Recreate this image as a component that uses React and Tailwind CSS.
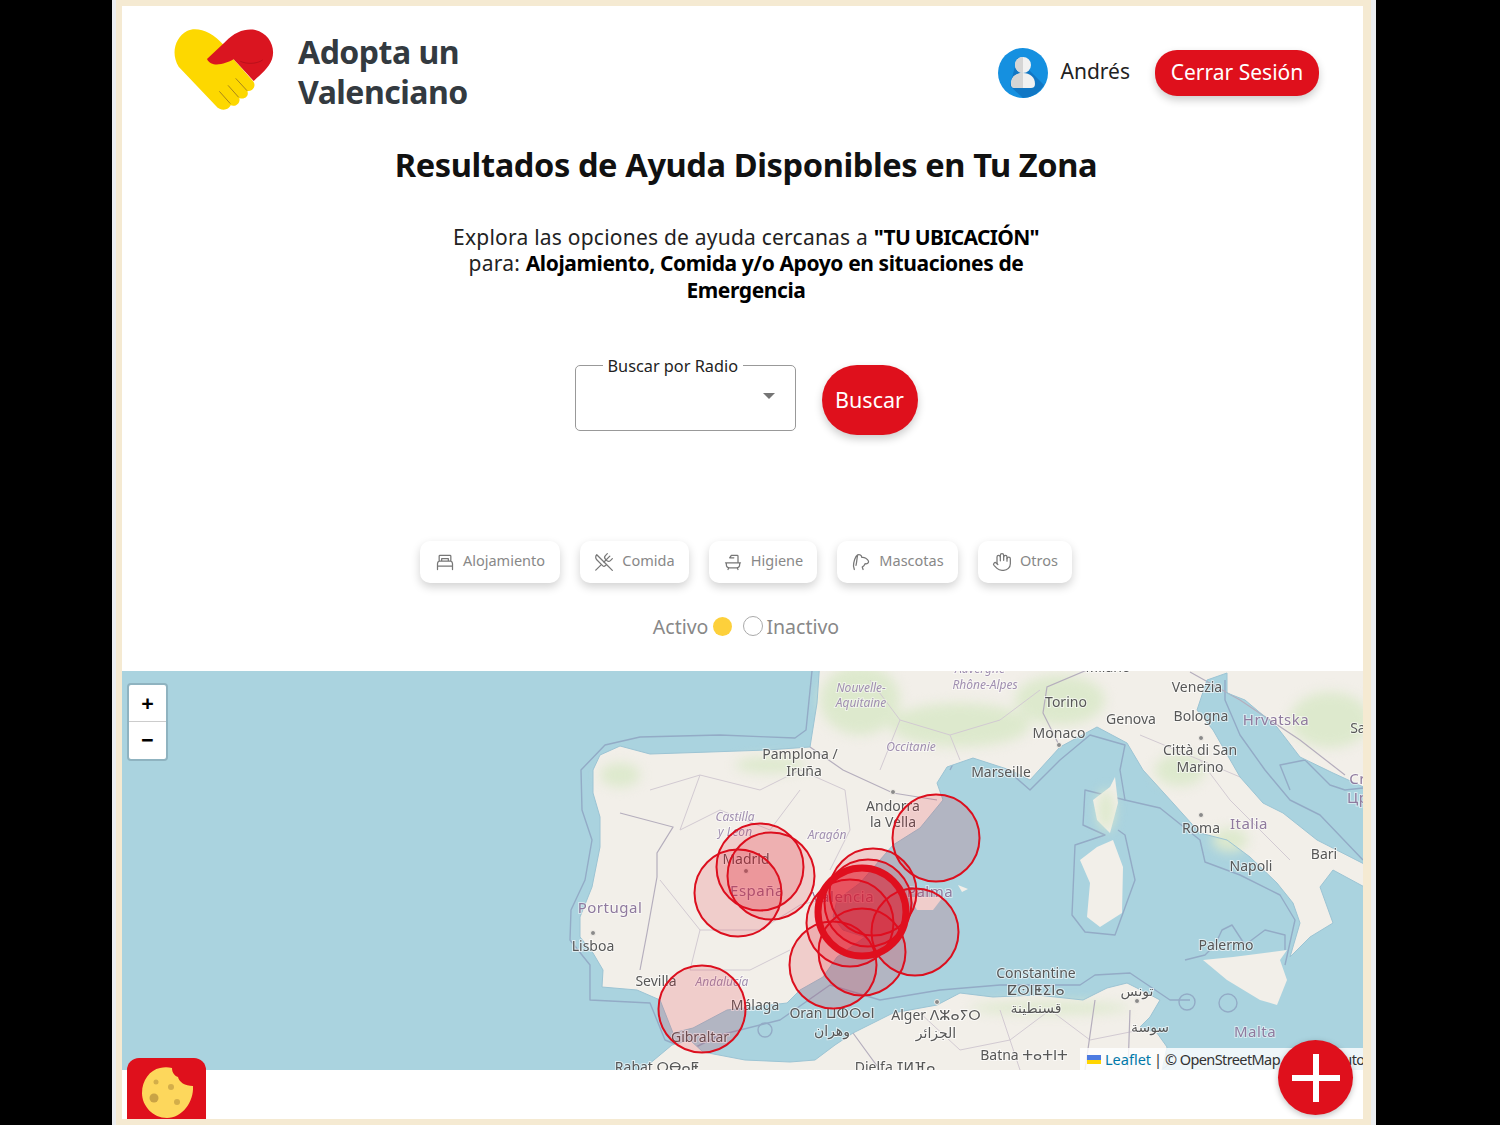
import { UtensilsCrossed, Hand } from 'lucide-react';

const font = "font-['Noto_Sans','Open_Sans',sans-serif]";

const Logo = () => (
    <svg viewBox="180 78 306 258" className="w-[102px] h-[86px] shrink-0">
        <path d="M335 135 C300 95 255 78 225 93 C190 112 175 160 200 200 L312 318 C325 334 350 332 356 316 C372 322 386 308 382 294 C398 300 412 288 406 274 C424 274 436 255 420 240 L365 178 L290 175 Z" fill="#fdd800" />
        <path d="M285 177 L340 125 C370 95 400 85 430 90 C470 100 492 140 480 178 C470 205 445 225 425 243 L365 178 C340 192 298 205 285 177 Z" fill="#da1520" />
        <path d="M385 184 C405 193 435 192 452 180" fill="none" stroke="#a80f18" strokeWidth="2" />
        <path d="M371 235 L405 272 M348 256 L380 292 M322 274 L355 311" fill="none" stroke="#a8851a" strokeWidth="3" />
    </svg>
);

const Avatar = () => (
    <svg viewBox="0 0 50 50" className="w-[50px] h-[50px] shrink-0">
        <circle cx="25" cy="25" r="25" fill="#1590e0" />
        <path d="M19 10 L46 37 A25 25 0 0 1 25 50 L12 38 Z" fill="#1177c4" />
        <circle cx="25" cy="17" r="8" fill="#f1f1f1" />
        <path d="M25 17 m-8 0 a8 8 0 0 0 8 8 v-16 a8 8 0 0 0 -8 8" fill="#d5d5d5" />
        <path d="M13 36 C13 29 18 25 25 25 C32 25 37 29 37 36 C37 39 35 40 33 40 L17 40 C15 40 13 39 13 36 Z" fill="#f1f1f1" />
        <path d="M25 25 C18 25 13 29 13 36 C13 39 15 40 17 40 L25 40 Z" fill="#d5d5d5" />
    </svg>
);

const lineIcon = (d) => ({ className }) => (
    <svg viewBox="0 0 24 24" fill="none" stroke="currentColor" strokeWidth="1.5" strokeLinecap="round" strokeLinejoin="round" className={className}>
        <path d={d} />
    </svg>
);

const BedIcon = lineIcon('M5 11 V5 a1 1 0 0 1 1-1 h12 a1 1 0 0 1 1 1 v6 M3 21 V14 a3 3 0 0 1 2-3 h14 a3 3 0 0 1 2 3 v7 M3 17 h18 M8 11 V8 h8 v3');
const TubIcon = lineIcon('M3 13 h18 M4 13 v2 a4 4 0 0 0 4 4 h8 a4 4 0 0 0 4-4 v-2 M18 13 V5 a1 1 0 0 0 -1-1 H10 l-2 3 h5 M7 19 l-1 2 M17 19 l1 2');
const PetIcon = lineIcon('M4 21 L3 17 C3 12 5 5 8 3.5 C10.5 2.5 12.5 4 13 6.5 C16 6 20 8 21 11 C21.5 13 19.5 14.5 17 14 L15.5 16.5 L13.5 18 L14.5 21 M8 3.5 C7 8 7 12 6 16');

const filters = [
    { label: 'Alojamiento', icon: BedIcon, w: 'w-[140px]' },
    { label: 'Comida', icon: UtensilsCrossed, w: 'w-[109px]' },
    { label: 'Higiene', icon: TubIcon, w: 'w-[108px]' },
    { label: 'Mascotas', icon: PetIcon, w: 'w-[121px]' },
    { label: 'Otros', icon: Hand, w: 'w-[94px]' },
];

// map labels: text, x, y
const labels = [
    ['Pamplona /', 800, 759], ['Iruña', 804, 776], ['Marseille', 1001, 777], ['Andorra', 893, 811], ['la Vella', 893, 827],
    ['Madrid', 746, 864], ['Lisboa', 593, 951], ['Sevilla', 656, 986], ['Málaga', 755, 1010], ['Gibraltar', 700, 1042],
    ['Oran ⵡⵀⵔⴰⵏ', 832, 1018], ['وهران', 832, 1036], ['Alger ⴷⵣⴰⵢⵔ', 936, 1020], ['الجزائر', 936, 1038],
    ['Constantine', 1036, 978], ['ⵇⵙⵏⵟⵉⵏⴰ', 1036, 995], ['قسنطينة', 1036, 1013], ['تونس', 1137, 996], ['سوسة', 1150, 1032],
    ['Batna ⵜⴰⵜⵏⵜ', 1024, 1060], ['Djelfa ⵊⵍⴼⴰ', 895, 1072], ['Rabat ⵔⴱⴰⵟ', 657, 1072],
    ['Torino', 1066, 707], ['Genova', 1131, 724], ['Monaco', 1059, 738], ['Venezia', 1197, 692], ['Bologna', 1201, 721],
    ['Città di San', 1200, 755], ['Marino', 1200, 772], ['Roma', 1201, 833], ['Napoli', 1251, 871], ['Bari', 1324, 859],
    ['Palermo', 1226, 950], ['Sarajevo', 1378, 733], ['Milano', 1108, 672],
];
const countries = [
    ['España', 757, 896], ['Portugal', 610, 913], ['Italia', 1249, 829], ['Malta', 1255, 1037], ['Hrvatska', 1276, 725],
    ['Crna', 1367, 784], ['Цpна', 1367, 803], ['Palma', 930, 897], ['Valencia', 843, 902],
];
const regions = [
    ['Nouvelle-', 861, 692], ['Aquitaine', 861, 707], ['Rhône-Alpes', 985, 689], ['Auvergne', 980, 673], ['Occitanie', 911, 751],
    ['Castilla', 735, 821], ['y León', 735, 836], ['Aragón', 827, 839], ['Andalucía', 722, 986],
];

const circles = [
    [936, 838], [702, 1009], [760, 867], [771, 876], [738, 893], [873, 892], [915, 932],
    [868, 903], [850, 923], [862, 952], [833, 965],
    [862, 912], [862, 912], [862, 912], [862, 912],
];

const europe = 'M820 660 L817 703 L810 747 L767 750 L710 752 L650 754 L620 746 L600 755 L593 770 L593 793 L600 817 L600 847 L592 887 L580 917 L580 937 L593 953 L603 970 L602 987 L637 990 L660 1000 L673 1033 L693 1028 L727 1010 L787 1003 L800 990 L823 977 L837 957 L865 937 L843 930 L833 917 L837 900 L860 883 L880 860 L893 845 L920 828 L943 800 L937 783 L947 767 L973 758 L1010 770 L1030 780 L1060 747 L1097 727 L1127 743 L1143 770 L1173 803 L1200 833 L1227 840 L1250 857 L1277 883 L1293 903 L1300 923 L1290 957 L1310 937 L1333 923 L1320 887 L1333 870 L1370 890 L1370 867 L1317 840 L1283 813 L1263 803 L1240 777 L1213 730 L1197 710 L1207 680 L1227 673 L1227 693 L1245 700 L1277 727 L1300 757 L1333 773 L1370 790 L1370 660 Z';
const africa = 'M630 1080 L672 1045 L690 1040 L703 1052 L745 1060 L790 1062 L815 1060 L835 1045 L853 1033 L893 1013 L937 1005 L960 993 L993 997 L1037 995 L1083 1000 L1107 988 L1127 983 L1147 993 L1160 1000 L1150 1017 L1140 1027 L1157 1033 L1167 1047 L1160 1080 Z';
const islands = [
    'M1115 777 L1118 803 L1110 833 L1097 820 L1093 800 L1110 787 Z',
    'M1113 840 L1123 867 L1122 913 L1100 927 L1087 917 L1090 883 L1080 860 L1097 847 Z',
    'M1203 960 L1233 957 L1287 950 L1280 960 L1287 980 L1277 1005 L1260 1000 L1227 980 Z',
    'M910 897 L943 897 L933 910 L917 910 Z',
    'M958 885 L968 889 L962 892 Z',
];
const seaLines = [
    'M812 671 L806 730 L795 738 L720 735 L640 737 L605 745 L581 770 L582 810 L592 840 L585 880 L571 910 L570 940 L590 965 L590 1000 L650 1003 L665 1040 L690 1050 L720 1035 L780 1020 L830 985 L880 1000 L940 990 L1000 985 L1080 985 L1095 975 L1130 973 L1170 1000 L1190 1000',
    'M950 770 L955 760 L990 755 L1030 790 L1060 760 L1090 735 L1125 745 L1120 770 L1125 800 L1160 808 L1200 840 L1205 862 L1240 875 L1280 895 L1295 920 L1285 965',
    'M1125 800 L1085 790 L1083 825 L1105 835 L1075 845 L1072 915 L1085 932 L1115 935 L1135 880 L1125 835 L1118 830',
    'M1185 960 L1205 955 L1215 945 L1222 930 L1232 925 L1245 945 L1265 930 L1285 935 L1285 950',
    'M1225 680 L1225 700 L1240 735 L1265 770 L1290 800 L1320 815 L1363 860',
    'M1290 790 L1280 765 L1305 760 L1330 785 L1345 790 L1363 788',
];
const borders = [
    'M810 747 L843 770 L893 793 L937 800',
    'M620 813 L673 827 L657 853 L657 877 L647 933 L640 970',
    'M1060 747 L1043 713 L1047 687 L1087 670',
    'M1190 672 L1240 700 L1300 740 L1345 775',
    'M853 1033 L880 1070 M1095 1000 L1085 1070 M1130 1010 L1128 1070',
];
const provinces = [
    'M650 790 L700 775 L760 790 L800 770 L845 790 L850 830 L830 870 M700 775 L680 830 L720 810 L770 830 L800 790',
    'M660 880 L700 930 L760 930 L800 905 L820 900 M700 930 L690 970 L750 970 L790 950',
    'M870 680 L900 720 L950 735 L1000 720 L1040 690 M900 720 L880 770 M950 735 L960 760',
    'M1140 735 L1200 760 L1230 800 L1260 830 L1290 860 M1200 760 L1240 777',
    'M920 1013 L960 1050 L1010 1040 L1050 1010 L1090 1040 L1140 1030 M1000 1010 L1020 1070',
];

const SpainMap = () => (
    <svg viewBox="122 671 1241 399" className="absolute inset-0 w-full h-full blur-[0.4px]">
        <rect x="122" y="671" width="1241" height="399" fill="#aad3df" />
        <g fill="none" stroke="#93abc6" strokeWidth="1.4" strokeLinejoin="round">
            {seaLines.map((d) => <path key={d} d={d} />)}
            <circle cx="1187" cy="1002" r="8" />
            <circle cx="1228" cy="1003" r="9" />
            <circle cx="1160" cy="1060" r="9" />
            <circle cx="765" cy="1030" r="7" />
        </g>
        <path d={europe} fill="#f2efe9" />
        <path d={africa} fill="#f2efe9" />
        {islands.map((d) => <path key={d} d={d} fill="#f2efe9" />)}
        <g fill="#dde9cd" className="blur-[6px]">
            <ellipse cx="860" cy="700" rx="40" ry="35" />
            <ellipse cx="960" cy="725" rx="70" ry="22" />
            <ellipse cx="1060" cy="700" rx="45" ry="25" />
            <ellipse cx="1330" cy="720" rx="40" ry="28" />
            <ellipse cx="1180" cy="770" rx="25" ry="16" />
            <ellipse cx="1106" cy="810" rx="8" ry="20" />
            <ellipse cx="620" cy="775" rx="20" ry="12" />
            <ellipse cx="770" cy="765" rx="35" ry="8" />
            <ellipse cx="1050" cy="1008" rx="80" ry="6" />
            <ellipse cx="1230" cy="840" rx="18" ry="12" />
        </g>
        <g fill="none" stroke="#d2cad2" strokeWidth="1">
            {provinces.map((d) => <path key={d} d={d} />)}
        </g>
        <g fill="none" stroke="#b5aebd" strokeWidth="1.2">
            {borders.map((d) => <path key={d} d={d} />)}
        </g>
        <path d={europe} fill="none" stroke="#9cc4d4" strokeWidth="1" />
        <path d={africa} fill="none" stroke="#9cc4d4" strokeWidth="1" />
        {[[893, 792], [593, 933], [746, 871], [1059, 745], [1201, 738], [1201, 815], [1137, 1001], [937, 1002]].map(([x, y]) => (
            <circle key={x} cx={x} cy={y} r="2.5" fill="#8a8a8a" stroke="#f2efe9" />
        ))}
        <g className="font-['Noto_Sans','DejaVu_Sans',sans-serif] text-[14px]" textAnchor="middle" fill="#575757" stroke="#ffffff" strokeOpacity="0.6" strokeWidth="2" paintOrder="stroke">
            {labels.map(([t, x, y]) => <text key={t} x={x} y={y}>{t}</text>)}
        </g>
        <g className="font-['Noto_Sans','DejaVu_Sans',sans-serif] text-[15px] tracking-[0.5px]" textAnchor="middle" fill="#8f7a9e" stroke="#ffffff" strokeOpacity="0.5" strokeWidth="2" paintOrder="stroke">
            {countries.map(([t, x, y]) => <text key={t} x={x} y={y}>{t}</text>)}
        </g>
        <g className="font-['Noto_Sans','DejaVu_Sans',sans-serif] text-[12px] italic" textAnchor="middle" fill="#a08fb0" stroke="#ffffff" strokeOpacity="0.5" strokeWidth="2" paintOrder="stroke">
            {regions.map(([t, x, y]) => <text key={t} x={x} y={y}>{t}</text>)}
        </g>
        {circles.map(([x, y], i) => (
            <circle key={i} cx={x} cy={y} r="43.5" fill="#e3101f" fillOpacity="0.15" stroke="#dc0f1e" strokeWidth="2" />
        ))}
        {/* the stacked markers read as one thick ring */}
        <circle cx="862" cy="912" r="44" fill="none" stroke="#e00f1e" strokeWidth="7" />
    </svg>
);

export default function App() {
    return (
        <div className={`h-[1125px] overflow-hidden bg-black pl-[112px] ${font}`}>
            <div className="w-[1264px] h-[1125px] bg-[#eceef0] pl-[4px] pr-[5px]">
                <div className="h-full bg-[#f5ead2] pl-[6px] pr-[8px] py-[6px]">
                    <div className="relative bg-white h-[1113px] overflow-hidden">
                        <header className="h-[134px] flex items-center justify-between pl-[50px] pr-[44px]">
                            <div className="flex items-center gap-[24px] -mt-[8px]">
                                <Logo />
                                <h1 className="text-[32px] leading-[40px] font-bold text-[#333a40] mt-[6px] tracking-[-0.5px]">Adopta un<br />Valenciano</h1>
                            </div>
                            <div className="flex items-center">
                                <Avatar />
                                <span className="ml-[13px] mr-[25px] text-[21px] text-[#222] -mt-[2px]">Andrés</span>
                                <button className="w-[164px] h-[46px] rounded-[22px] bg-[#df101c] text-white text-[21px] shadow-[0_4px_8px_rgba(0,0,0,0.2)]">Cerrar Sesión</button>
                            </div>
                        </header>

                        <div className="pl-[7px] flex flex-col items-center">
                            <h2 className="mt-[4px] text-[32.6px] leading-[42px] font-bold text-[#111] whitespace-nowrap tracking-[-0.4px]">Resultados de Ayuda Disponibles en Tu Zona</h2>
                            <p className="mt-[38px] text-[21px] leading-[26.4px] text-center text-[#222] whitespace-nowrap tracking-[0.22px]">
                                Explora las opciones de ayuda cercanas a <b className="font-bold text-black tracking-[-0.7px]">"TU UBICACIÓN"</b><br />
                                para: <b className="font-bold text-black tracking-[-0.4px]">Alojamiento, Comida y/o Apoyo en situaciones de</b><br />
                                <b className="font-bold text-black tracking-[-0.4px]">Emergencia</b>
                            </p>

                            <div className="mt-[62px] flex items-start gap-[26px]">
                                <div className="relative w-[221px] h-[66px] border border-[#999] rounded-[5px] bg-white">
                                    <span className="absolute left-[27px] -top-[10px] bg-white px-[5px] text-[16.3px] leading-[20px] text-[#222] whitespace-nowrap">Buscar por Radio</span>
                                    <div className="absolute right-[20px] top-[27px] border-x-[6px] border-t-[6px] border-x-transparent border-t-[#757575]"></div>
                                </div>
                                <button className="w-[96px] h-[70px] rounded-[35px] bg-[#df101c] text-white text-[21.5px] shadow-[0_4px_8px_rgba(0,0,0,0.2)]">Buscar</button>
                            </div>

                            <div className="mt-[106px] flex gap-[20px]">
                                {filters.map(({ label, icon: Icon, w }) => (
                                    <div key={label} className={`${w} h-[42px] rounded-[10px] bg-white flex items-center justify-center gap-[8px] text-[#888] text-[14.5px] shadow-[0_4px_10px_rgba(0,0,0,0.18)]`}>
                                        <Icon className="w-[20px] h-[20px] text-[#777] stroke-[1.5]" />
                                        <span className="-mt-[2px]">{label}</span>
                                    </div>
                                ))}
                            </div>

                            <div className="mt-[31px] h-[24px] flex items-center text-[19.5px] text-[#888]">
                                <span>Activo</span>
                                <span className="ml-[5px] w-[19px] h-[19px] rounded-full bg-[#fdd03b]"></span>
                                <span className="ml-[11px] w-[20px] h-[20px] rounded-full border border-[#aaa]"></span>
                                <span className="ml-[3px]">Inactivo</span>
                            </div>
                        </div>

                        <div className="relative mt-[33px] h-[399px] overflow-hidden">
                            <SpainMap />
                            <div className="absolute left-[5px] top-[12px] w-[41px] rounded-[4px] border-2 border-[#8fb3c0] bg-white text-black font-bold text-[22px] leading-[34px] text-center overflow-hidden">
                                <div className="h-[37px] border-b border-[#ccc]">+</div>
                                <div className="h-[37px]">−</div>
                            </div>
                            <div className="absolute right-0 bottom-0 w-[283px] h-[22px] bg-white/80 flex items-center pl-[7px] text-[14.5px] leading-[22px] text-[#333] whitespace-nowrap overflow-hidden">
                                <span className="w-[14px] h-[9px] mr-[4px] shrink-0 flex flex-col">
                                    <span className="h-[5px] bg-[#4c7be1]"></span>
                                    <span className="h-[4px] bg-[#ffd500]"></span>
                                </span>
                                <span className="text-[#0078a8]">Leaflet</span>
                                <span className="mx-[3px]">|</span>
                                <span className="tracking-[-0.6px]">© OpenStreetMap</span>
                                <span className="ml-[19px] tracking-[-0.6px]">contributors</span>
                            </div>
                        </div>

                        <div className="absolute left-[5px] bottom-0 w-[79px] h-[61px] rounded-t-[12px] bg-[#df101c] overflow-hidden">
                            <svg viewBox="0 0 79 61" className="w-full h-full">
                                <path d="M33 10 C37 9 41 9 45 10 C45 15 48 18 51 19 C52 24 58 28 66 28 C67 44 55 60 40 60 C26 60 15 48 15 35 C15 22 23 12 33 10 Z" fill="#fdd75c" />
                                <circle cx="29" cy="24" r="2.5" fill="#d3ae4a" />
                                <circle cx="44" cy="29" r="3" fill="#d3ae4a" />
                                <circle cx="27" cy="40" r="4.5" fill="#c9a345" />
                                <circle cx="50" cy="44" r="3" fill="#d3ae4a" />
                            </svg>
                        </div>

                        <button className="absolute right-[10px] bottom-[4px] w-[75px] h-[75px] rounded-full bg-[#df101c] flex items-center justify-center shadow-[0_2px_6px_rgba(0,0,0,0.25)]">
                            <svg viewBox="0 0 48 48" className="w-[48px] h-[48px]">
                                <path d="M21 0 H27 V21 H48 V27 H27 V48 H21 V27 H0 V21 H21 Z" fill="#fff" />
                            </svg>
                        </button>
                    </div>
                </div>
            </div>
        </div>
    );
}
